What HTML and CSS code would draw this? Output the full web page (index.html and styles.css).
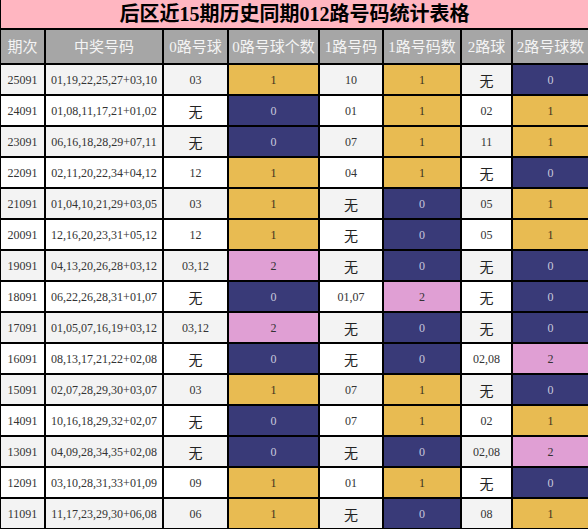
FILE: index.html
```html
<!DOCTYPE html>
<html lang="zh">
<head>
<meta charset="UTF-8">
<title>后区近15期历史同期012路号码统计表格</title>
<link rel="stylesheet" href="styles.css">
</head>
<body>
<table class="stats">
<colgroup>
<col class="c1"><col class="c2"><col class="c3"><col class="c4"><col class="c5"><col class="c6"><col class="c7"><col class="c8">
</colgroup>
<tr class="title"><td colspan="8">后区近15期历史同期012路号码统计表格</td></tr>
<tr class="head">
<th>期次</th><th>中奖号码</th><th>0路号球</th><th>0路号球个数</th><th>1路号码</th><th>1路号码数</th><th>2路球</th><th>2路号球数</th>
</tr>
<tr class="odd"><td>25091</td><td>01,19,22,25,27+03,10</td><td>03</td><td class="gold">1</td><td>10</td><td class="gold">1</td><td class="none">无</td><td class="navy">0</td></tr>
<tr><td>24091</td><td>01,08,11,17,21+01,02</td><td class="none">无</td><td class="navy">0</td><td>01</td><td class="gold">1</td><td>02</td><td class="gold">1</td></tr>
<tr class="odd"><td>23091</td><td>06,16,18,28,29+07,11</td><td class="none">无</td><td class="navy">0</td><td>07</td><td class="gold">1</td><td>11</td><td class="gold">1</td></tr>
<tr><td>22091</td><td>02,11,20,22,34+04,12</td><td>12</td><td class="gold">1</td><td>04</td><td class="gold">1</td><td class="none">无</td><td class="navy">0</td></tr>
<tr class="odd"><td>21091</td><td>01,04,10,21,29+03,05</td><td>03</td><td class="gold">1</td><td class="none">无</td><td class="navy">0</td><td>05</td><td class="gold">1</td></tr>
<tr><td>20091</td><td>12,16,20,23,31+05,12</td><td>12</td><td class="gold">1</td><td class="none">无</td><td class="navy">0</td><td>05</td><td class="gold">1</td></tr>
<tr class="odd"><td>19091</td><td>04,13,20,26,28+03,12</td><td>03,12</td><td class="pink">2</td><td class="none">无</td><td class="navy">0</td><td class="none">无</td><td class="navy">0</td></tr>
<tr><td>18091</td><td>06,22,26,28,31+01,07</td><td class="none">无</td><td class="navy">0</td><td>01,07</td><td class="pink">2</td><td class="none">无</td><td class="navy">0</td></tr>
<tr class="odd"><td>17091</td><td>01,05,07,16,19+03,12</td><td>03,12</td><td class="pink">2</td><td class="none">无</td><td class="navy">0</td><td class="none">无</td><td class="navy">0</td></tr>
<tr><td>16091</td><td>08,13,17,21,22+02,08</td><td class="none">无</td><td class="navy">0</td><td class="none">无</td><td class="navy">0</td><td>02,08</td><td class="pink">2</td></tr>
<tr class="odd"><td>15091</td><td>02,07,28,29,30+03,07</td><td>03</td><td class="gold">1</td><td>07</td><td class="gold">1</td><td class="none">无</td><td class="navy">0</td></tr>
<tr><td>14091</td><td>10,16,18,29,32+02,07</td><td class="none">无</td><td class="navy">0</td><td>07</td><td class="gold">1</td><td>02</td><td class="gold">1</td></tr>
<tr class="odd"><td>13091</td><td>04,09,28,34,35+02,08</td><td class="none">无</td><td class="navy">0</td><td class="none">无</td><td class="navy">0</td><td>02,08</td><td class="pink">2</td></tr>
<tr><td>12091</td><td>03,10,28,31,33+01,09</td><td>09</td><td class="gold">1</td><td>01</td><td class="gold">1</td><td class="none">无</td><td class="navy">0</td></tr>
<tr class="odd"><td>11091</td><td>11,17,23,29,30+06,08</td><td>06</td><td class="gold">1</td><td class="none">无</td><td class="navy">0</td><td>08</td><td class="gold">1</td></tr>
</table>
</body>
</html>
```
FILE: styles.css
```css
body{
margin:0;
background-color:white;
overflow:hidden;
}
.stats{
border-collapse:collapse;
table-layout:fixed;
width:590px;
margin:-2px 0 0 -1px;
font-family:"Liberation Serif","Noto Sans CJK SC",serif;
font-size:12px;
line-height:16px;
color:#333;
}
.c1{width:45px;}
.c2{width:118px;}
.c3{width:65px;}
.c4{width:91px;}
.c5{width:64px;}
.c6{width:78px;}
.c7{width:51px;}
.c8{width:77px;}
.stats td,
.stats th{
border:2px solid black;
text-align:center;
padding:0;
white-space:nowrap;
}
.stats tr{
height:31px;
}
.stats tr.title{
height:30px;
}
.stats tr.head{
height:35px;
}
.title td{
background-color:#ffb6c1;
color:black;
font-weight:bold;
font-size:20px;
line-height:22px;
}
.head th{
background-color:#a6a6a6;
color:#f4f4f4;
font-weight:normal;
font-size:15px;
line-height:18px;
}
.odd td{
background-color:#f3f3f3;
}
.stats .none{
font-family:"Noto Sans CJK SC",sans-serif;
font-size:14px;
color:#222;
}
.stats .gold{
background-color:#e8bb52;
color:#3a3020;
font-size:12px;
}
.stats .navy{
background-color:#393a78;
color:#c8c8dc;
font-size:12px;
}
.stats .pink{
background-color:#e09fd4;
color:#333;
font-size:12px;
}
```
